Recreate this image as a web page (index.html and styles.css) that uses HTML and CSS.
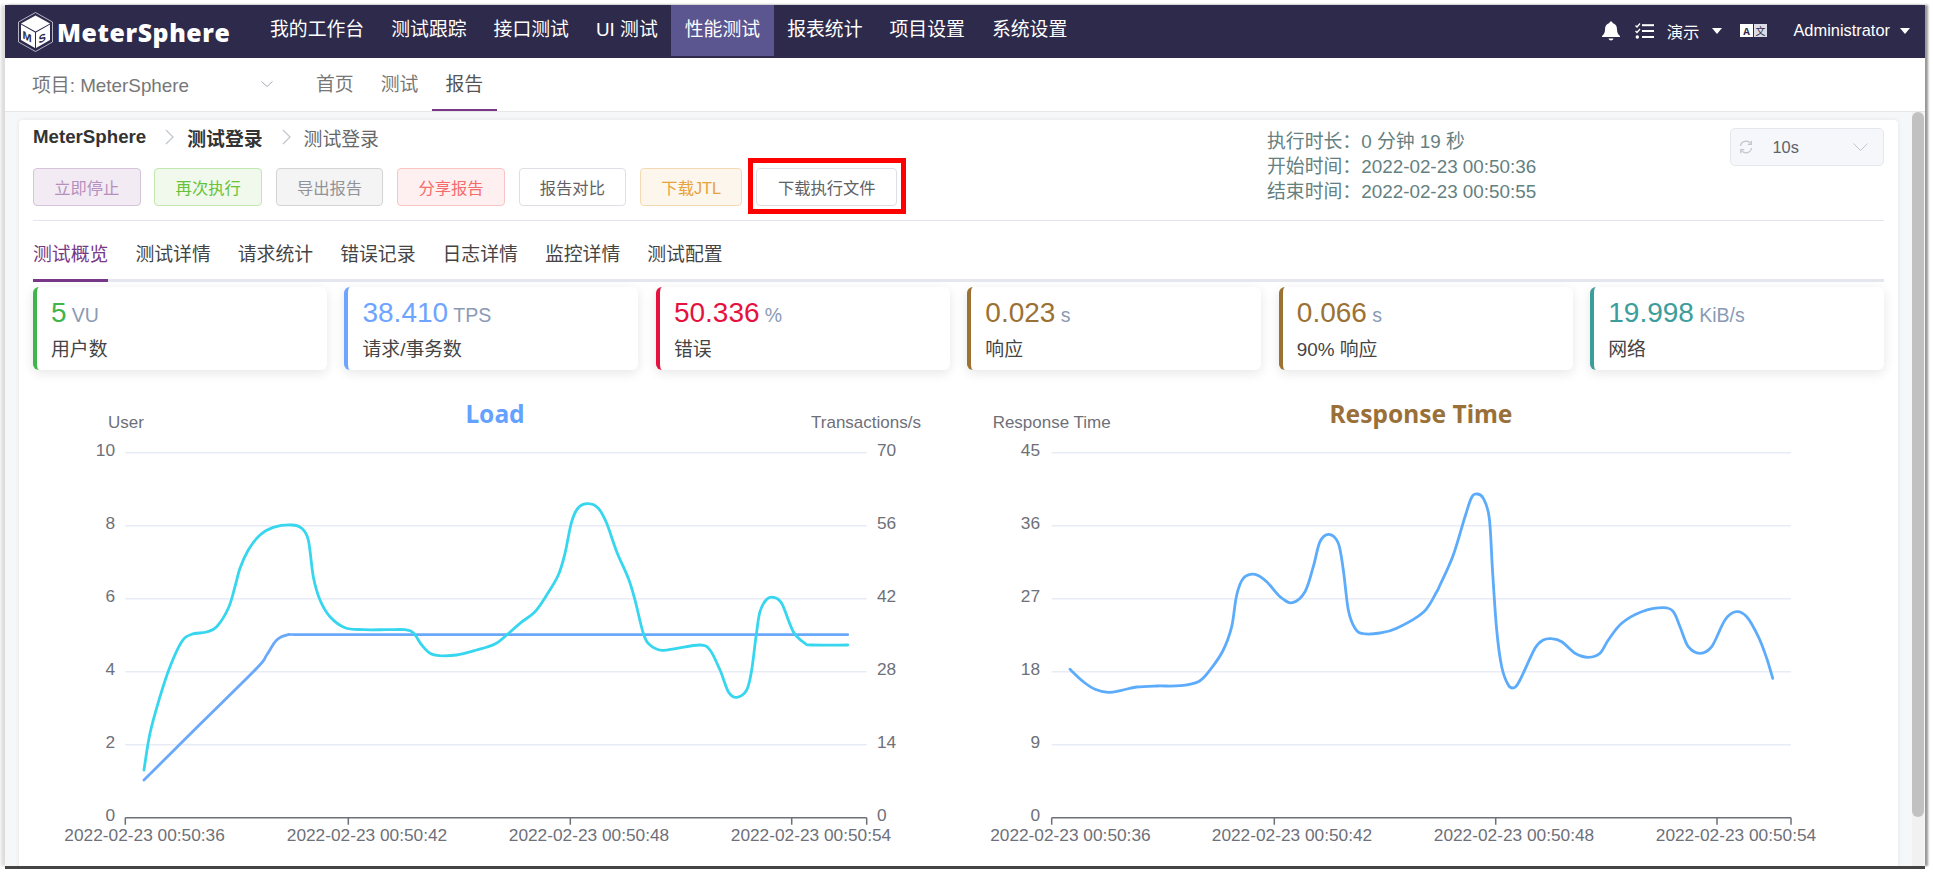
FILE: index.html
```html
<!DOCTYPE html>
<html lang="zh-CN">
<head>
    <meta charset="UTF-8">
    <title>MeterSphere</title>
    <link rel="stylesheet" href="styles.css">
</head>
<body>
<div class="frame">
    <!-- top navigation -->
    <header class="top-nav">
        <div class="logo">
            <svg class="logo-icon" viewBox="0 0 35 40" width="35" height="40">
                <polygon points="17.5,0.5 34.5,10 34.5,30 17.5,39.5 0.5,30 0.5,10" fill="none" stroke="#d8d8e4" stroke-width="0.8"/>
                <polygon points="17.5,3.5 32,11.5 17.5,19.5 3,11.5" fill="#fff"/>
                <polygon points="3,12.5 17,20.5 17,36 3,28" fill="#fff"/>
                <polygon points="18,20.5 32,12.5 32,28 18,36" fill="#fff"/>
                <text class="logo-letter" transform="translate(4.5 26) skewY(28)">M</text>
                <text class="logo-letter" transform="translate(20.5 32) skewY(-28)">S</text>
            </svg>
            <span class="logo-text">MeterSphere</span>
        </div>
        <nav class="main-menu">
            <a class="menu-item">我的工作台</a>
            <a class="menu-item">测试跟踪</a>
            <a class="menu-item">接口测试</a>
            <a class="menu-item">UI 测试</a>
            <a class="menu-item active">性能测试</a>
            <a class="menu-item">报表统计</a>
            <a class="menu-item">项目设置</a>
            <a class="menu-item">系统设置</a>
        </nav>
        <div class="nav-right">
            <svg class="bell" viewBox="0 0 18 20" width="18" height="20">
                <path d="M9 0.5c1 0 1.6.7 1.6 1.6 3 .8 4.4 3.2 4.4 6.2 0 3.400 1 5 3 6.700v1H0v-1c2-1.700 3-3.300 3-6.700 0-3 1.400-5.400 4.400-6.200C7.400 1.200 8 .5 9 .5z" fill="#fff"/>
                <path d="M6.500 17.500h5c-.3 1.300-1.300 2-2.500 2s-2.200-.7-2.500-2z" fill="#fff"/>
            </svg>
            <svg class="tasks" viewBox="0 0 19 16" width="19" height="16">
                <path d="M0.500 2.500l1.500 1.500 3-3.500M0.500 8l1.500 1.500 3-3.500" fill="none" stroke="#fff" stroke-width="1.300"/>
                <circle cx="2.300" cy="14" r="1.700" fill="#fff"/>
                <rect x="7" y="1.200" width="12" height="2" fill="#fff"/>
                <rect x="7" y="7" width="12" height="2" fill="#fff"/>
                <rect x="7" y="13" width="12" height="2" fill="#fff"/>
            </svg>
            <span class="nav-text demo">演示</span>
            <i class="caret"></i>
            <svg class="lang" viewBox="0 0 27 13" width="27" height="13">
                <rect x="0" y="0" width="13" height="13" fill="#fff"/>
                <rect x="14" y="0" width="13" height="13" fill="#dcdce4"/>
                <text class="lang-a" x="6.500" y="10.500">A</text>
                <text class="lang-zh" x="20.500" y="10.500">文</text>
            </svg>
            <span class="nav-text admin">Administrator</span>
            <i class="caret"></i>
        </div>
    </header>

    <!-- second level menu -->
    <div class="sub-nav">
        <div class="project-select">
            <span class="project-name">项目: MeterSphere</span>
            <svg class="chevron" viewBox="0 0 12 6" width="12" height="6"><path d="M0.500 0.500L6 5.500l5.500-5" fill="none" stroke="#a8abb2" stroke-width="1"/></svg>
        </div>
        <a class="sub-item">首页</a>
        <a class="sub-item">测试</a>
        <a class="sub-item active">报告</a>
    </div>

    <div class="main">
        <div class="content">
            <div class="report-card">
                <div class="report-head">
                    <div class="report-left">
                        <div class="breadcrumb">
                            <b>MeterSphere</b>
                            <svg class="crumb-sep" viewBox="0 0 9 16" width="9" height="16"><path d="M1 1l7 7-7 7" fill="none" stroke="#c0c4cc" stroke-width="1.200"/></svg>
                            <b>测试登录</b>
                            <svg class="crumb-sep" viewBox="0 0 9 16" width="9" height="16"><path d="M1 1l7 7-7 7" fill="none" stroke="#c0c4cc" stroke-width="1.200"/></svg>
                            <span class="crumb-last">测试登录</span>
                        </div>
                        <div class="btn-row">
                            <button class="btn btn-stop">立即停止</button>
                            <button class="btn btn-run">再次执行</button>
                            <button class="btn btn-export">导出报告</button>
                            <button class="btn btn-share">分享报告</button>
                            <button class="btn btn-plain">报告对比</button>
                            <button class="btn btn-jtl">下载JTL</button>
                            <div class="marked">
                                <button class="btn btn-plain btn-file">下载执行文件</button>
                                <span class="red-box"></span>
                            </div>
                        </div>
                    </div>
                    <div class="report-info">
                        <div>执行时长：0 分钟 19 秒</div>
                        <div>开始时间：2022-02-23 00:50:36</div>
                        <div>结束时间：2022-02-23 00:50:55</div>
                    </div>
                    <div class="refresh-select">
                        <svg class="refresh-icon" viewBox="0 0 14 14" width="14" height="14">
                            <path d="M1.500 6A5.600 5.600 0 0 1 11.500 3.300M12.500 8A5.600 5.600 0 0 1 2.500 10.700" fill="none" stroke="#c0c4cc" stroke-width="1.200"/>
                            <path d="M12.300 0.800v3.500H8.800M1.700 13.200V9.700h3.500" fill="none" stroke="#c0c4cc" stroke-width="1.200"/>
                        </svg>
                        <span class="refresh-value">10s</span>
                        <svg class="refresh-arrow" viewBox="0 0 15 8" width="15" height="8"><path d="M0.500 0.500L7.500 7.500l7-7" fill="none" stroke="#c0c4cc" stroke-width="1"/></svg>
                    </div>
                </div>

                <div class="tabs">
                    <a class="tab active">测试概览</a>
                    <a class="tab">测试详情</a>
                    <a class="tab">请求统计</a>
                    <a class="tab">错误记录</a>
                    <a class="tab">日志详情</a>
                    <a class="tab">监控详情</a>
                    <a class="tab">测试配置</a>
                </div>

                <div class="stats">
                    <div class="stat stat-green">
                        <div class="stat-value"><span class="num">5</span> <span class="unit">VU</span></div>
                        <div class="stat-label">用户数</div>
                    </div>
                    <div class="stat stat-blue">
                        <div class="stat-value"><span class="num">38.410</span> <span class="unit">TPS</span></div>
                        <div class="stat-label">请求/事务数</div>
                    </div>
                    <div class="stat stat-red">
                        <div class="stat-value"><span class="num">50.336</span> <span class="unit">%</span></div>
                        <div class="stat-label">错误</div>
                    </div>
                    <div class="stat stat-brown">
                        <div class="stat-value"><span class="num">0.023</span> <span class="unit">s</span></div>
                        <div class="stat-label">响应</div>
                    </div>
                    <div class="stat stat-brown">
                        <div class="stat-value"><span class="num">0.066</span> <span class="unit">s</span></div>
                        <div class="stat-label">90% 响应</div>
                    </div>
                    <div class="stat stat-teal">
                        <div class="stat-value"><span class="num">19.998</span> <span class="unit">KiB/s</span></div>
                        <div class="stat-label">网络</div>
                    </div>
                </div>

                <div class="charts">
                    <!-- chart coordinates are the page coordinates of the screenshot -->
                    <svg class="chart" viewBox="33 395 925 471" width="925" height="471">
                        <text class="chart-title title-load" x="495" y="423">Load</text>
                        <text class="axis-name" x="126" y="428">User</text>
                        <text class="axis-name" x="866" y="428">Transactions/s</text>
                        <path class="grid" d="M125.300 452.700H866.700M125.300 525.700H866.700M125.300 598.700H866.700M125.300 671.700H866.700M125.300 744.700H866.700"/>
                        <path class="axis" d="M125.300 817.700H866.700M125.300 817.700v7M348.300 817.700v7M570.300 817.700v7M791.700 817.700v7M866.700 817.700v7"/>
                        <g class="y-left">
                            <text x="115" y="456">10</text><text x="115" y="529">8</text><text x="115" y="602">6</text><text x="115" y="675">4</text><text x="115" y="748">2</text><text x="115" y="821">0</text>
                        </g>
                        <g class="y-right">
                            <text x="877" y="456">70</text><text x="877" y="529">56</text><text x="877" y="602">42</text><text x="877" y="675">28</text><text x="877" y="748">14</text><text x="877" y="821">0</text>
                        </g>
                        <g class="x-labels">
                            <text x="144.600" y="841">2022-02-23 00:50:36</text><text x="367" y="841">2022-02-23 00:50:42</text><text x="589" y="841">2022-02-23 00:50:48</text><text x="811" y="841">2022-02-23 00:50:54</text>
                        </g>
                        <path id="line-users" class="line line-users"/>
                        <path id="line-tps" class="line line-tps"/>
                    </svg>
                    <svg class="chart" viewBox="958 395 926 471" width="926" height="471">
                        <text class="chart-title title-resp" x="1421" y="423">Response Time</text>
                        <text class="axis-name" x="1051.700" y="428">Response Time</text>
                        <path class="grid" d="M1051.700 452.700H1791M1051.700 525.700H1791M1051.700 598.700H1791M1051.700 671.700H1791M1051.700 744.700H1791"/>
                        <path class="axis" d="M1051.700 817.700H1791M1051.700 817.700v7M1274.300 817.700v7M1495.700 817.700v7M1717 817.700v7M1791 817.700v7"/>
                        <g class="y-left">
                            <text x="1040" y="456">45</text><text x="1040" y="529">36</text><text x="1040" y="602">27</text><text x="1040" y="675">18</text><text x="1040" y="748">9</text><text x="1040" y="821">0</text>
                        </g>
                        <g class="x-labels">
                            <text x="1070.400" y="841">2022-02-23 00:50:36</text><text x="1292" y="841">2022-02-23 00:50:42</text><text x="1514" y="841">2022-02-23 00:50:48</text><text x="1736" y="841">2022-02-23 00:50:54</text>
                        </g>
                        <path id="line-resp" class="line line-resp"/>
                    </svg>
                </div>
            </div>
        </div>
        <div class="scrollbar"><div class="scroll-thumb"></div></div>
    </div>
</div>
<script src="charts.js"></script>
</body>
</html>
```

FILE: styles.css
```css
* {
    box-sizing: border-box;
}

html, body {
    margin: 0;
    height: 100%;
    overflow: hidden;
    background: #fff;
}

body {
    font-family: "Liberation Sans", "Noto Sans CJK SC", sans-serif;
    font-size: 18.85px;
    color: #606266;
}

/* the window inside the screenshot */
.frame {
    width: 1920px;
    height: 861px;
    margin: 5px 0 0 5px;
    display: flex;
    flex-direction: column;
    box-shadow: 0 3px 0 #444, 3px 0 2px #999, -4px 0 3px #ddd;
}

/* top navigation */
.top-nav {
    height: 53px;
    flex: none;
    display: flex;
    background: #2e2a4b;
    color: #fff;
}

.logo {
    width: 251.5px;
    display: flex;
    align-items: center;
    padding-left: 13px;
}

.logo-icon {
    flex: none;
    margin-right: 4px;
}

.logo-letter {
    font: bold 11px "Liberation Sans", sans-serif;
    fill: #2e2a4b;
}

.logo-text {
    font: 800 24.8px "Open Sans", sans-serif;
    letter-spacing: 0.6px;
}

.main-menu {
    display: flex;
}

.menu-item {
    height: 51px;
    line-height: 50px;
    padding: 0 13.5px;
    white-space: nowrap;
}

.menu-item.active {
    background: #5b5590;
}

.nav-right {
    margin-left: auto;
    display: flex;
    align-items: center;
    padding: 0 15px 2px 0;
    font-size: 16.4px;
}

.bell {
    margin-right: 15px;
}

.tasks {
    margin-right: 13px;
}

.nav-text.demo {
    margin-right: 13px;
}

.nav-text.admin {
    margin-right: 10px;
}

.caret {
    width: 0;
    height: 0;
    border-left: 5px solid transparent;
    border-right: 5px solid transparent;
    border-top: 6px solid #fff;
    margin-top: 1px;
}

.lang {
    margin: 0 26px 0 18px;
}

.lang-a, .lang-zh {
    text-anchor: middle;
    fill: #2e2a4b;
}

.lang-a {
    font: bold 11px "Liberation Mono", monospace;
}

.lang-zh {
    font: 10px "Noto Sans CJK SC", sans-serif;
}

/* second level menu */
.sub-nav {
    height: 54px;
    flex: none;
    display: flex;
    background: #fff;
    border-bottom: 1px solid #e6e6e6;
}

.project-select {
    width: 297.5px;
    display: flex;
    align-items: center;
    padding: 0 0 2px 27px;
    color: #777;
}

.project-name {
    width: 229px;
}

.sub-item {
    height: 53px;
    line-height: 53px;
    padding: 0 13.5px;
    color: #777;
    border-bottom: 2px solid transparent;
}

.sub-item.active {
    color: #555;
    border-bottom-color: #783887;
}

/* page body with its scrollbar */
.main {
    flex: 1;
    min-height: 0;
    display: flex;
    background: #f6f7f8;
}

.content {
    flex: 1;
    min-width: 0;
    overflow: hidden;
    padding: 8px 14px 0;
}

.scrollbar {
    width: 12px;
    margin-right: 1px;
    flex: none;
    background: #f1f1f1;
}

.scroll-thumb {
    height: 705px;
    background: #c1c1c1;
    border-radius: 6px;
}

.report-card {
    height: 800px;
    padding: 0 14px;
    background: #fff;
    border-radius: 4px;
    box-shadow: 0 0 4px rgba(0, 0, 0, 0.08);
}

.report-head {
    display: flex;
    height: 101px;
    border-bottom: 1px solid #e4e4ec;
}

.report-left {
    width: 1234px;
    flex: none;
}

.breadcrumb {
    height: 34px;
    display: flex;
    align-items: center;
    color: #333;
}

.breadcrumb b:first-child {
    margin-right: 19px;
    font-size: 18.7px;
}

.breadcrumb b {
    font-weight: bold;
}

.crumb-sep {
    flex: none;
}

.breadcrumb .crumb-sep + b {
    margin: 0 19px 0 13px;
}

.crumb-last {
    margin-left: 13px;
    color: #666;
}

.btn-row {
    display: flex;
    gap: 13.8px;
    margin-top: 14px;
}

.btn {
    width: 107.6px;
    height: 38px;
    padding: 0;
    font: 16.3px "Liberation Sans", "Noto Sans CJK SC", sans-serif;
    border: 1px solid;
    border-radius: 4px;
}

.btn-stop { background: #f2ebf3; border-color: #d7c3db; color: #b68fbd; }
.btn-run { background: #f0f9eb; border-color: #c2e7b0; color: #67c23a; }
.btn-export { background: #f4f4f5; border-color: #d3d4d6; color: #909399; }
.btn-share { background: #fef0f0; border-color: #fbc4c4; color: #f56c6c; }
.btn-plain { background: #fff; border-color: #dcdfe6; color: #606266; }
.btn-jtl { width: 102.5px; background: #fdf6ec; border-color: #f5dab1; color: #e6a23c; }
.btn-file { width: 141px; }

.marked {
    position: relative;
}

/* red annotation drawn over the button */
.red-box {
    position: absolute;
    top: -10px;
    right: -9px;
    bottom: -8px;
    left: -8px;
    border: 5px solid #f00;
}

.report-info {
    flex: 1;
    padding-top: 9px;
    line-height: 25px;
    color: #648080;
    white-space: nowrap;
}

.refresh-select {
    width: 154.5px;
    height: 38px;
    margin-top: 8px;
    flex: none;
    display: flex;
    align-items: center;
    padding-left: 8px;
    font-size: 16.4px;
    color: #606266;
    background: #f5f7fa;
    border: 1px solid #e4e7ed;
    border-radius: 5px;
}

.refresh-value {
    margin-left: 20px;
    width: 80px;
}

/* tabs */
.tabs {
    height: 61px;
    display: flex;
    gap: 27px;
    border-bottom: 3px solid #e4e7ed;
}

.tab {
    height: 61px;
    padding-top: 21px;
    line-height: 26px;
    color: #444;
    white-space: nowrap;
}

.tab.active {
    color: #783887;
    border-bottom: 3px solid #783887;
}

/* stat cards */
.stats {
    display: flex;
    gap: 17.7px;
    margin-top: 5px;
}

.stat {
    width: 294.5px;
    height: 83px;
    padding: 9px 0 0 14px;
    background: #fff;
    border-left: 4px solid;
    border-radius: 6px;
    box-shadow: 0 3px 12px rgba(0, 0, 0, 0.1);
}

.stat-value {
    height: 34px;
    line-height: 34px;
    white-space: nowrap;
}

.num {
    font-size: 28px;
}

.unit {
    font-size: 19.5px;
    color: #8a9ab5;
}

.stat-label {
    margin-top: 7px;
    line-height: 26px;
    color: #444;
}

.stat-green { border-left-color: #40b54b; }
.stat-green .num { color: #40b54b; }
.stat-blue { border-left-color: #6ea4ff; }
.stat-blue .num { color: #6ea4ff; }
.stat-red { border-left-color: #e5123f; }
.stat-red .num { color: #e5123f; }
.stat-brown { border-left-color: #9b7134; }
.stat-brown .num { color: #9b7134; }
.stat-teal { border-left-color: #3c9e9b; }
.stat-teal .num { color: #3c9e9b; }

/* charts */
.charts {
    display: flex;
    margin-top: 25px;
}

.chart {
    display: block;
    flex: none;
    font-family: "Liberation Sans", sans-serif;
}

.chart-title {
    font: bold 24.5px "Noto Sans", sans-serif;
    text-anchor: middle;
}

.title-load { fill: #65a2ff; }
.title-resp { fill: #9a7039; }

.axis-name {
    font-size: 17px;
    fill: #6e7079;
    text-anchor: middle;
}

.y-left text, .y-right text, .x-labels text {
    font-size: 17.3px;
    fill: #6e7079;
}

.y-left text { text-anchor: end; }
.x-labels text { text-anchor: middle; }

.grid {
    fill: none;
    stroke: #e8ecf6;
    stroke-width: 1.5;
}

.axis {
    fill: none;
    stroke: #6e7079;
    stroke-width: 1.5;
}

.line {
    fill: none;
    stroke-width: 2.8;
    stroke-linecap: round;
    stroke-linejoin: round;
}

.line-users { stroke: #6aa8fa; }
.line-tps { stroke: #36d6ee; }
.line-resp { stroke: #5cacfb; }
```

FILE: charts.js
```js
// Points were read off the reference crops, so each list has its crop origin (3x zoom)
function crop(x0, y0, pts) {
    return pts.map(function (p) {
        return [x0 + p[0] / 3, y0 + p[1] / 3];
    });
}

// Catmull-Rom through the points, written as cubic beziers
function smooth(pts) {
    var d = 'M' + pts[0][0].toFixed(1) + ' ' + pts[0][1].toFixed(1);
    for (var i = 0; i < pts.length - 1; i++) {
        var p0 = pts[i - 1] || pts[i];
        var p1 = pts[i];
        var p2 = pts[i + 1];
        var p3 = pts[i + 2] || p2;
        var c1x = p1[0] + (p2[0] - p0[0]) / 6;
        var c1y = p1[1] + (p2[1] - p0[1]) / 6;
        var c2x = p2[0] - (p3[0] - p1[0]) / 6;
        var c2y = p2[1] - (p3[1] - p1[1]) / 6;
        d += 'C' + c1x.toFixed(1) + ' ' + c1y.toFixed(1) + ' ' + c2x.toFixed(1) + ' ' + c2y.toFixed(1) + ' ' + p2[0].toFixed(1) + ' ' + p2[1].toFixed(1);
    }
    return d;
}

var users = crop(100, 440, [[132, 1020], [300, 853], [470, 685], [500, 645], [530, 600], [565, 584], [600, 584], [900, 584], [1200, 584], [1500, 584], [1800, 584], [2243, 584]]);

var tps = crop(100, 440, [[132, 990], [150, 880], [180, 770], [210, 680], [245, 605], [275, 583], [320, 576], [350, 560], [385, 505], [405, 440], [420, 385], [445, 330], [480, 285], [520, 262], [575, 255], [605, 265], [625, 300], [640, 410], [660, 480], [690, 530], [735, 563], [790, 569], [860, 569], [915, 569], [940, 578], [965, 615], [990, 640], [1020, 647], [1070, 645], [1130, 630], [1185, 612], [1220, 585]])
    .concat(crop(500, 440, [[60, 550], [105, 515], [140, 465], [175, 405], [195, 340], [215, 245], [235, 203], [265, 191], [295, 205], [320, 250], [350, 335], [385, 415], [405, 480], [430, 580], [450, 615], [485, 631], [530, 625], [600, 615], [630, 630], [660, 690], [685, 755], [710, 772], [740, 750], [755, 690], [768, 590], [780, 515], [800, 478], [820, 472], [845, 490], [880, 575], [915, 610], [935, 615], [1043, 615]]));

var resp = crop(1040, 440, [[90, 688], [130, 725], [165, 748], [205, 757], [245, 751], [290, 741], [350, 738], [420, 737], [475, 725], [510, 690], [550, 630], [575, 560], [590, 465], [610, 415], [645, 403], [680, 425], [720, 470], [757, 488], [795, 455], [820, 380], [840, 305], [867, 283], [895, 310], [910, 390], [925, 510], [945, 565], [970, 581], [1020, 579], [1070, 565], [1150, 517]])
    .concat(crop(1400, 440, [[110, 455], [120, 435], [160, 345], [195, 230], [215, 172], [232, 162], [250, 175], [268, 235], [278, 400], [290, 570], [305, 680], [325, 735], [342, 743], [360, 720], [405, 625], [430, 600], [455, 596], [485, 605], [525, 640], [565, 652], [600, 640], [625, 600], [665, 550], [725, 515], [790, 503], [820, 515], [840, 560], [865, 620], [900, 640], [935, 620], [975, 540], [1008, 515], [1040, 530], [1075, 590], [1100, 655], [1118, 715]]));

document.getElementById('line-users').setAttribute('d', smooth(users));
document.getElementById('line-tps').setAttribute('d', smooth(tps));
document.getElementById('line-resp').setAttribute('d', smooth(resp));
```
